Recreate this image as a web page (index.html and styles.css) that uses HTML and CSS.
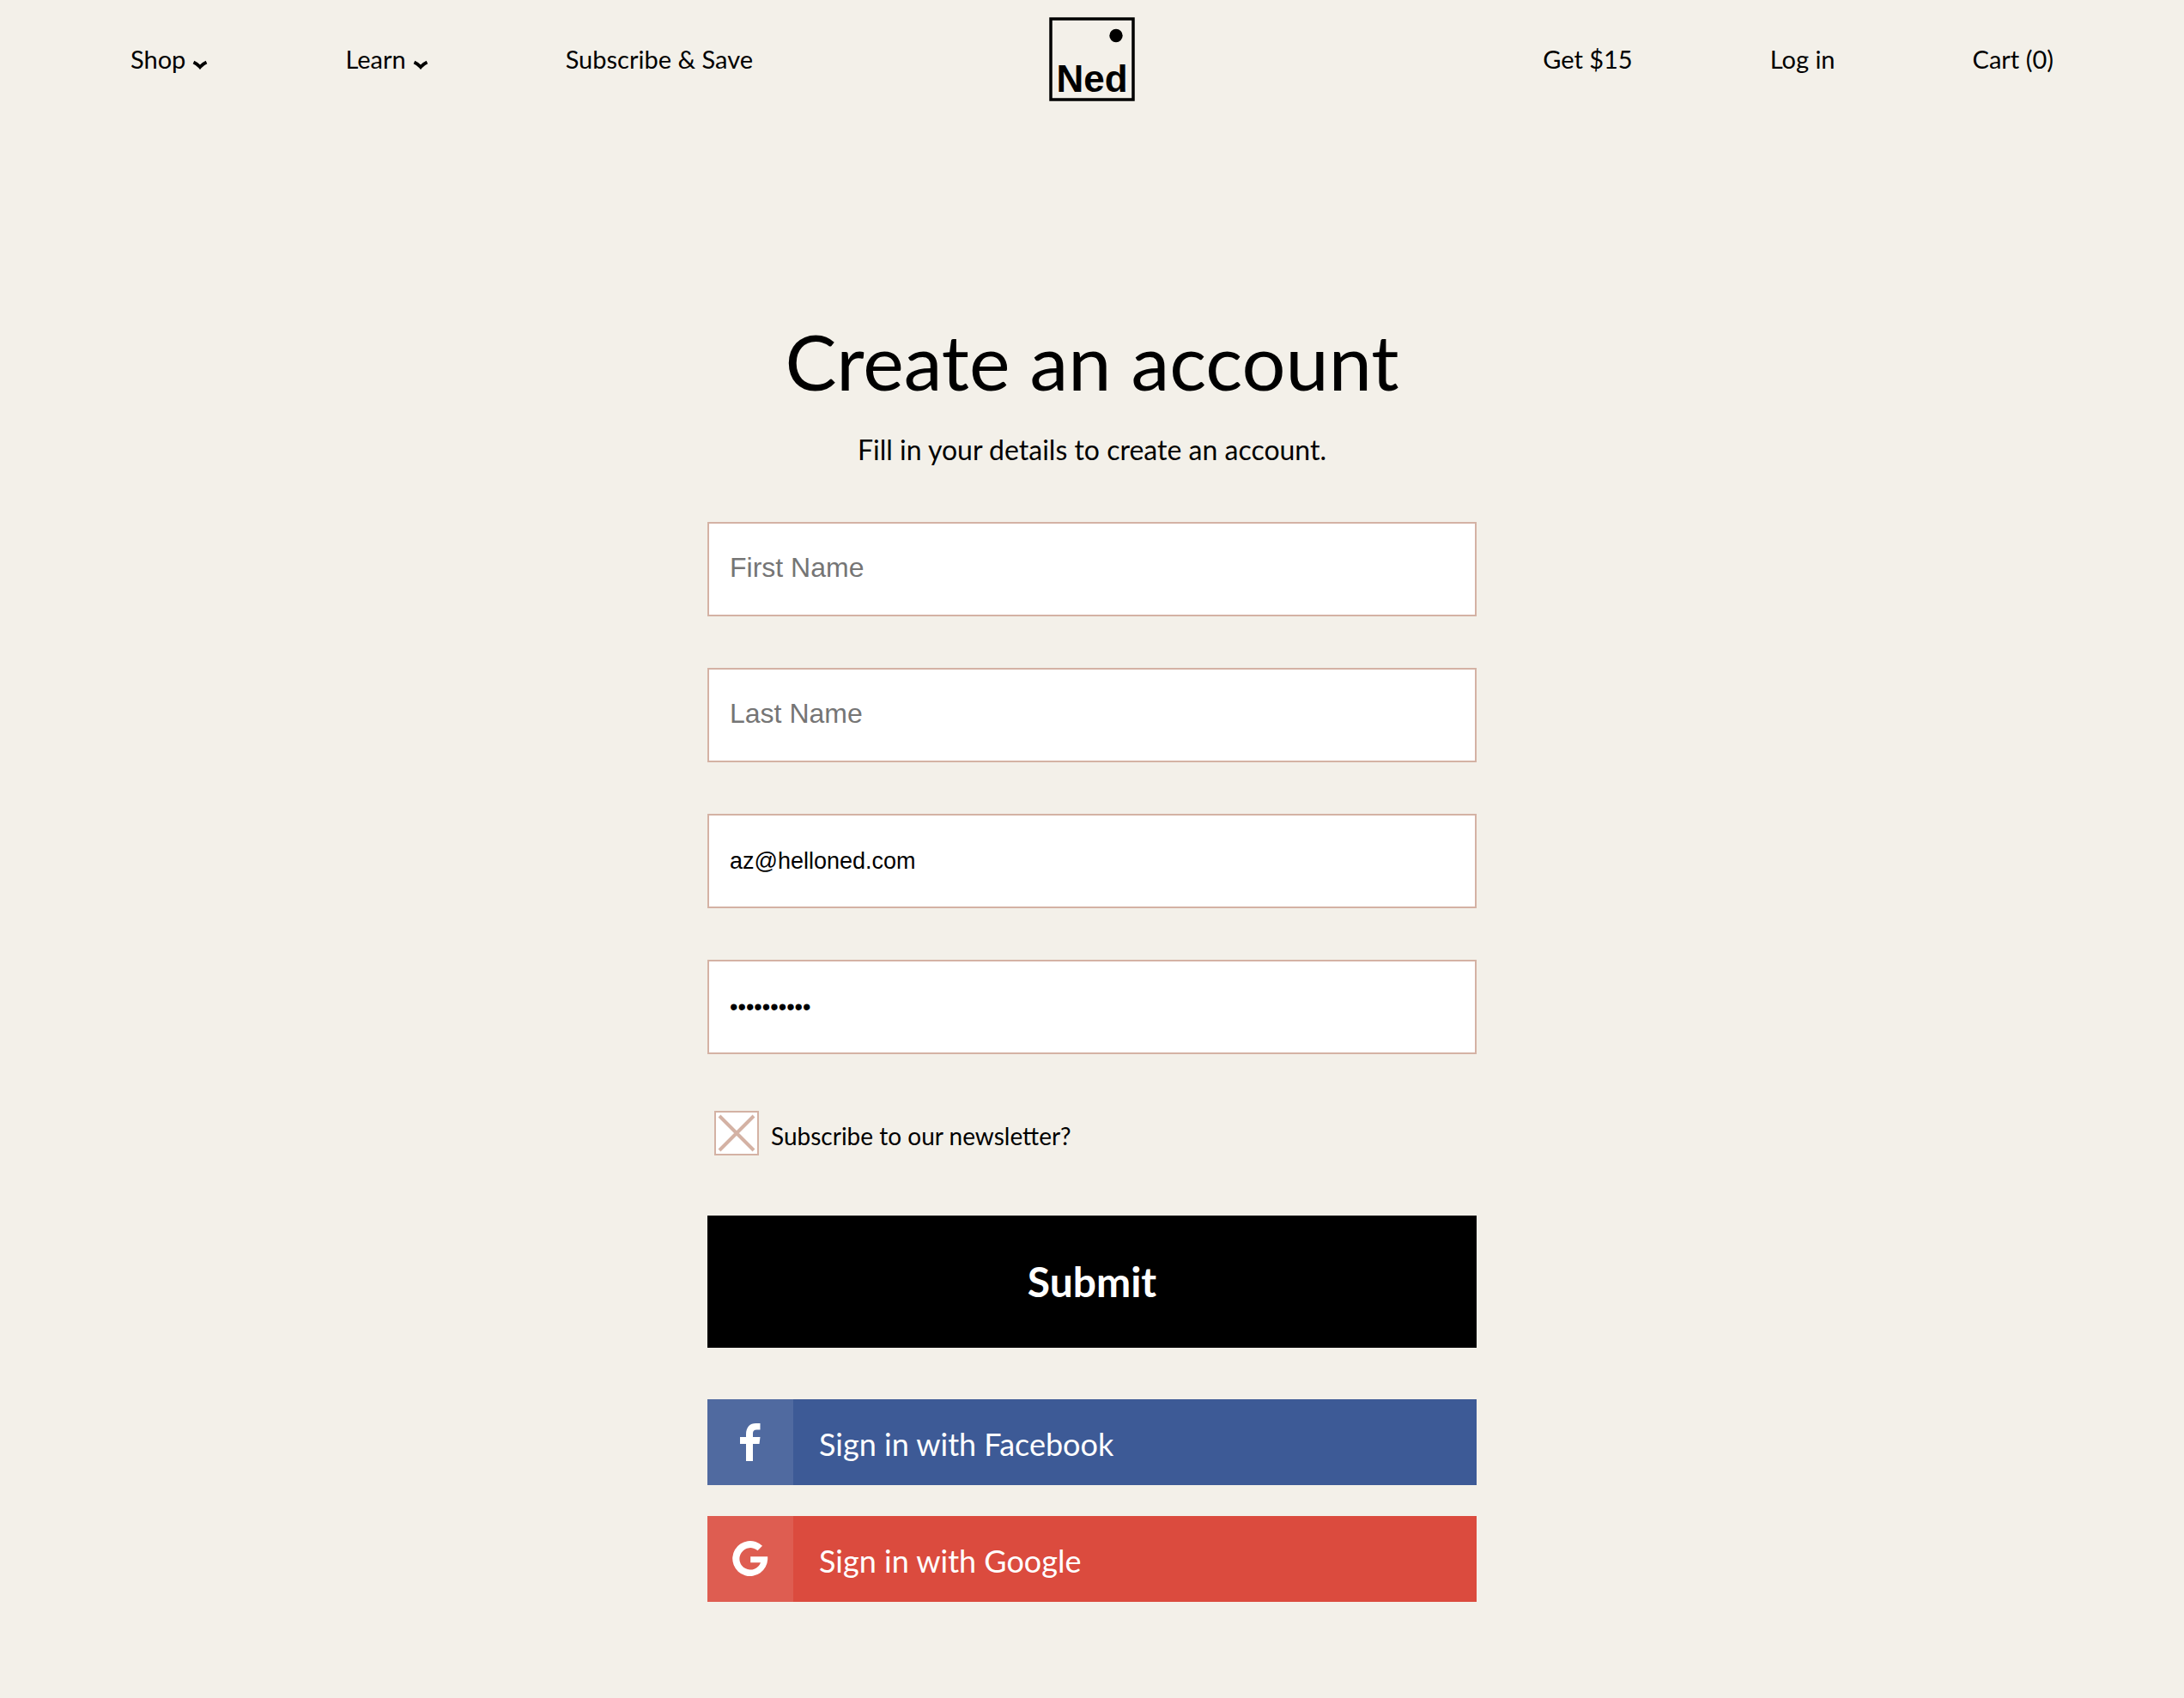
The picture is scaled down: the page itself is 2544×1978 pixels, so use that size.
FILE: index.html
```
<!DOCTYPE html>
<html lang="en">
  <head>
    <meta charset="UTF-8" />
    <meta name="viewport" content="width=device-width, initial-scale=1.0" />
    <title>Create an account - Ned</title>
    <link rel="stylesheet" href="styles.css">
  </head>
  <body>
    <header class="header">
      <nav class="nav">
        <a href="#" class="nav-link">
          Shop
          <svg class="chevron" viewBox="0 0 18 11" aria-hidden="true"><path d="M1.500 2.500 Q6 4.500 9 8 Q12 4.500 16.500 2.500" /></svg>
        </a>
        <a href="#" class="nav-link">
          Learn
          <svg class="chevron" viewBox="0 0 18 11" aria-hidden="true"><path d="M1.500 2.500 Q6 4.500 9 8 Q12 4.500 16.500 2.500" /></svg>
        </a>
        <a href="#" class="nav-link">Subscribe &amp; Save</a>
      </nav>

      <a href="#" class="logo" aria-label="Ned home">
        <svg viewBox="0 0 100 98">
          <rect x="2" y="2" width="96" height="94" fill="none" stroke="#000" stroke-width="3.5" />
          <circle cx="78" cy="21.5" r="7.7" />
          <text class="logo-text" x="50" y="87" text-anchor="middle">Ned</text>
        </svg>
      </a>

      <nav class="nav nav-right">
        <a href="#" class="nav-link">Get $15</a>
        <a href="#" class="nav-link">Log in</a>
        <a href="#" class="nav-link">Cart (0)</a>
      </nav>
    </header>

    <main class="account">
      <h1 class="title">Create an account</h1>
      <p class="subtitle">Fill in your details to create an account.</p>

      <form class="form" action="#" method="post">
        <input class="field" type="text" name="first_name" placeholder="First Name" aria-label="First Name" />
        <input class="field" type="text" name="last_name" placeholder="Last Name" aria-label="Last Name" />
        <input class="field" type="email" name="email" value="az@helloned.com" placeholder="Email" aria-label="Email" />
        <input class="field" type="password" name="password" value="helloned15" placeholder="Password" aria-label="Password" />

        <div class="newsletter">
          <input class="checkbox" type="checkbox" id="newsletter" name="newsletter" checked />
          <label for="newsletter">Subscribe to our newsletter?</label>
        </div>

        <button class="submit-btn" type="submit">Submit</button>
      </form>

      <!-- Social login -->
      <div class="social">
        <a href="#" class="social-btn facebook">
          <span class="social-icon">
            <svg width="24" height="44" viewBox="0 0 24 44" aria-hidden="true">
              <path d="M7 44V24H0v-8h7v-3C7 4.500 11.500 0 18.500 0H23.500v7.500H19.500c-3 0-4.500 1.300-4.500 4V16h8.500l-1 8H15v20z" />
            </svg>
          </span>
          <span class="social-label">Sign in with Facebook</span>
        </a>
        <a href="#" class="social-btn google">
          <span class="social-icon">
            <svg width="42" height="42" viewBox="0 0 42 42" aria-hidden="true">
              <path d="M41.200 18.300H21.200V25.200H33A12.700 12.700 0 1 1 29.500 11.300L35 5.800A20.500 20.500 0 1 0 41.200 21.500z" />
            </svg>
          </span>
          <span class="social-label">Sign in with Google</span>
        </a>
      </div>
    </main>
  </body>
</html>
```
FILE: styles.css
```
* {
  margin: 0;
  padding: 0;
  box-sizing: border-box;
}

body {
  font-family: "Lato", sans-serif;
  background-color: #f3f0e9;
  color: #000;
  min-height: 100vh;
}

a {
  color: inherit;
  text-decoration: none;
}

/* Header */
.header {
  display: grid;
  grid-template-columns: 1fr auto 1fr;
  align-items: center;
  padding: 20px 152px;
}

.nav {
  display: flex;
  align-items: center;
  gap: 160px;
}

.nav-right {
  justify-content: flex-end;
}

.nav-link {
  display: flex;
  align-items: center;
  gap: 8px;
  font-size: 29px;
  line-height: 36px;
  white-space: nowrap;
}

.chevron {
  width: 18px;
  height: 11px;
  margin-top: 12px;
  fill: none;
  stroke: #000;
  stroke-width: 4;
}

.logo svg {
  display: block;
  width: 100px;
  height: 98px;
}

.logo-text {
  font-family: "Liberation Sans", Arial, sans-serif;
  font-size: 44px;
  font-weight: bold;
}

/* Account form */
.account {
  width: 100%;
  max-width: 896px;
  margin: 0 auto;
  padding: 226px 0 112px;
}

.title {
  font-size: 90px;
  font-weight: normal;
  line-height: 112px;
  text-align: center;
}

.subtitle {
  margin-top: 28px;
  font-size: 32px;
  line-height: 40px;
  text-align: center;
}

.form {
  display: flex;
  flex-direction: column;
  gap: 60px;
  margin-top: 64px;
}

.field {
  width: 100%;
  height: 110px;
  padding: 0 24px;
  border: 2px solid #d4b2a4;
  border-radius: 0;
  background-color: #fff;
  color: #000;
  font-family: "Liberation Sans", Arial, sans-serif;
  font-size: 27px;
  outline: none;
}

.field::placeholder {
  color: #757575;
  font-size: 32px;
}

.newsletter {
  display: flex;
  align-items: center;
  gap: 14px;
  padding: 6px 8px 10px;
  font-size: 28px;
  line-height: 36px;
}

.newsletter label {
  padding-top: 6px;
}

.checkbox {
  appearance: none;
  width: 52px;
  height: 52px;
  border: 2px solid #d4b2a4;
  background-color: #fff;
  cursor: pointer;
}

.checkbox:checked {
  background-image: url("data:image/svg+xml,%3Csvg xmlns='http://www.w3.org/2000/svg' viewBox='0 0 48 48'%3E%3Cpath d='M4 4L44 44M44 4L4 44' stroke='%23d4b2a4' stroke-width='4'/%3E%3C/svg%3E");
}

.submit-btn {
  width: 100%;
  padding: 49px 0;
  border: none;
  background-color: #000;
  color: #fff;
  font-family: inherit;
  font-size: 48px;
  font-weight: bold;
  line-height: 56px;
  cursor: pointer;
}

.social {
  display: flex;
  flex-direction: column;
  gap: 36px;
  margin-top: 60px;
}

.social-btn {
  display: flex;
  min-height: 100px;
  color: #fff;
  font-size: 36px;
  line-height: 44px;
}

.facebook {
  background-color: #3d5a96;
}

.google {
  background-color: #db4b3e;
}

.social-icon {
  display: flex;
  align-items: center;
  justify-content: center;
  width: 100px;
  background-color: rgba(255, 255, 255, 0.1);
}

.social-icon svg {
  fill: #fff;
}

.social-label {
  align-self: center;
  padding: 4px 30px 0;
}

/* Small screens */
@media (max-width: 1600px) {
  .header {
    padding: 20px 40px;
  }
  .nav {
    gap: 40px;
  }
}

@media (max-width: 960px) {
  .account {
    padding: 80px 24px;
  }
  .title {
    font-size: 56px;
    line-height: 64px;
  }
}
```
